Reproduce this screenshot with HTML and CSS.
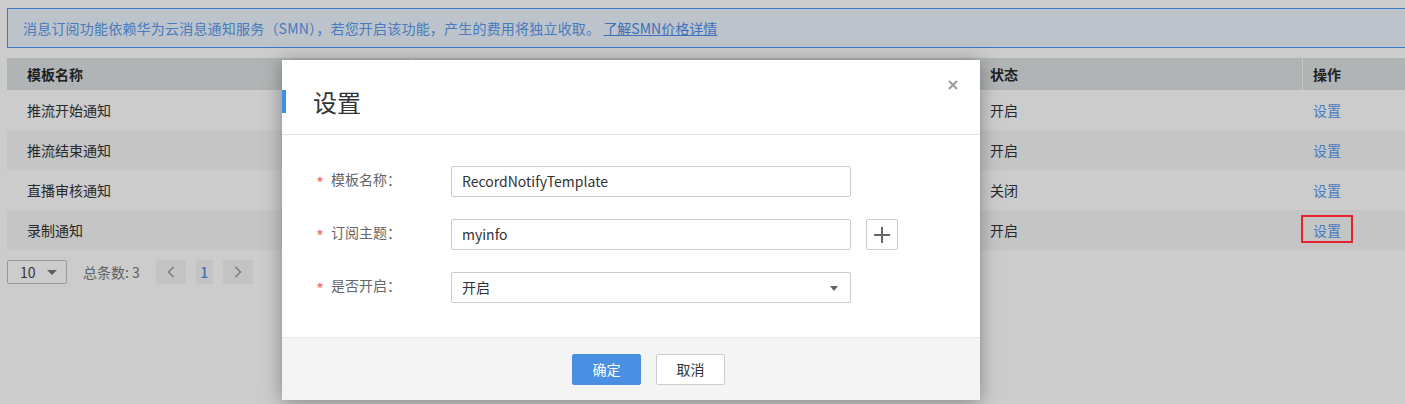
FILE: index.html
```html
<!DOCTYPE html>
<html lang="zh-CN">
<head>
<meta charset="utf-8">
<title>消息订阅</title>
<link rel="stylesheet" href="styles.css">
</head>
<body>
<div class="page">
  <div class="alert"><span class="alert-text">消息订阅功能依赖华为云消息通知服务（SMN），若您开启该功能，产生的费用将独立收取。</span> <a class="alert-link" href="#">了解SMN价格详情</a></div>

  <div class="table">
    <div class="thead">
      <div class="th first">模板名称</div>
      <div class="th">订阅主题</div>
      <div class="th">状态</div>
      <div class="th">操作</div>
    </div>
    <div class="tbody">
      <div class="tr">
        <div class="td first">推流开始通知</div>
        <div class="td">myinfo</div>
        <div class="td">开启</div>
        <div class="td"><a class="link" href="#">设置</a></div>
      </div>
      <div class="tr">
        <div class="td first">推流结束通知</div>
        <div class="td">myinfo</div>
        <div class="td">开启</div>
        <div class="td"><a class="link" href="#">设置</a></div>
      </div>
      <div class="tr">
        <div class="td first">直播审核通知</div>
        <div class="td">myinfo</div>
        <div class="td">关闭</div>
        <div class="td"><a class="link" href="#">设置</a></div>
      </div>
      <div class="tr">
        <div class="td first">录制通知</div>
        <div class="td">myinfo</div>
        <div class="td">开启</div>
        <div class="td"><a class="link" href="#">设置</a></div>
      </div>
    </div>
  </div>

  <div class="pager">
    <div class="size-select"><span>10</span><span class="caret"></span></div>
    <div class="total">总条数: 3</div>
    <div class="pbtn prev"><svg width="8" height="12" viewBox="0 0 8 12"><polyline points="6.5,1 1.5,6 6.5,11" fill="none" stroke="#9a9a9a" stroke-width="1.5"/></svg></div>
    <div class="pnum">1</div>
    <div class="pbtn next"><svg width="8" height="12" viewBox="0 0 8 12"><polyline points="1.5,1 6.5,6 1.5,11" fill="none" stroke="#9a9a9a" stroke-width="1.5"/></svg></div>
  </div>
</div>

<div class="mask"></div>
<div class="mark"></div>

<div class="modal">
  <div class="modal-head">
    <div class="modal-title">设置</div>
    <div class="close"><svg width="10" height="10" viewBox="0 0 10 10"><path d="M1 1L9 9M9 1L1 9" stroke="#9b9b9b" stroke-width="2"/></svg></div>
  </div>
  <div class="modal-body">
    <div class="form-row">
      <div class="label"><span class="req">*</span>模板名称：</div>
      <div class="input">RecordNotifyTemplate</div>
    </div>
    <div class="form-row">
      <div class="label"><span class="req">*</span>订阅主题：</div>
      <div class="input">myinfo</div>
      <div class="plus-btn"><svg width="16" height="16" viewBox="0 0 16 16"><path d="M8 0V16M0 8H16" stroke="#666" stroke-width="2"/></svg></div>
    </div>
    <div class="form-row">
      <div class="label"><span class="req">*</span>是否开启：</div>
      <div class="input select">开启<span class="select-caret"></span></div>
    </div>
  </div>
  <div class="modal-foot">
    <div class="btn primary">确定</div>
    <div class="btn">取消</div>
  </div>
</div>
</body>
</html>
```

FILE: styles.css
```css
html, body {
  margin: 0;
  padding: 0;
  overflow: hidden;
}
body {
  width: 1405px;
  height: 404px;
  position: relative;
  background: #ffffff;
  font-family: "Noto Sans CJK SC", sans-serif;
  font-size: 14px;
  color: #333333;
}
a { text-decoration: none; }

.page {
  width: 1412px;
  padding: 8px 0 0 7px;
}

.alert {
  height: 38px;
  line-height: 38px;
  border: 1px solid #4b96fa;
  background: #ebf4fe;
  color: #5a9af0;
  padding-left: 15px;
  white-space: nowrap;
}
.alert-text {
  letter-spacing: 0.2px;
}
.alert-link {
  color: #4b8fe8;
  text-decoration: underline;
}

.table {
  margin-top: 10px;
}
.thead, .tr {
  display: grid;
  grid-template-columns: 404px 568px 323px 1fr;
}
.thead {
  height: 32px;
  line-height: 32px;
  background: #dee2e2;
  font-weight: bold;
  color: #2a2a2a;
}
.th {
  padding-left: 10px;
  border-left: 1px solid #f8f8f8;
}
.th.first {
  border-left: none;
  padding-left: 20px;
}
.tr {
  height: 40px;
  line-height: 40px;
}
.tr:nth-child(even) {
  background: #f6f7f6;
}
.td {
  padding-left: 11px;
}
.td.first {
  padding-left: 20px;
}
.link {
  color: #5a9af0;
}

.pager {
  margin-top: 10px;
  display: flex;
  align-items: center;
  height: 24px;
}
.size-select {
  width: 46px;
  height: 22px;
  line-height: 22px;
  border: 1px solid #bdbdbd;
  border-radius: 2px;
  padding-left: 12px;
  display: flex;
  align-items: center;
  color: #444;
}
.caret {
  margin-left: 11px;
  width: 0;
  height: 0;
  border-left: 5px solid transparent;
  border-right: 5px solid transparent;
  border-top: 5px solid #777;
}
.total {
  margin-left: 16px;
  color: #777;
}
.pbtn, .pnum {
  height: 24px;
  background: #f4f4f4;
  display: flex;
  align-items: center;
  justify-content: center;
}
.pbtn {
  width: 30px;
}
.prev {
  margin-left: 16px;
}
.pnum {
  width: 17px;
  margin-left: 10px;
  color: #4a90e2;
  font-weight: 500;
}
.next {
  margin-left: 10px;
}

.mask {
  position: absolute;
  inset: 0;
  background: rgba(0, 0, 0, 0.2);
  z-index: 1;
}
.mark {
  position: absolute;
  left: 1301px;
  top: 215px;
  width: 52px;
  height: 28px;
  box-sizing: border-box;
  border: 2px solid #e8212a;
  z-index: 2;
}

.modal {
  position: absolute;
  left: 282px;
  top: 60px;
  width: 698px;
  height: 340px;
  background: #ffffff;
  box-shadow: 0 2px 18px rgba(0, 0, 0, 0.35);
  z-index: 3;
  display: flex;
  flex-direction: column;
}
.modal-head {
  height: 74px;
  border-bottom: 1px solid #e3e3e3;
  position: relative;
}
.modal-title {
  margin-top: 30px;
  height: 23px;
  line-height: 23px;
  border-left: 4px solid #3d8ef0;
  padding-left: 27px;
  font-size: 24px;
  color: #333;
}
.close {
  position: absolute;
  top: 20px;
  right: 22px;
  width: 10px;
  height: 10px;
  display: flex;
}
.modal-body {
  flex: 1;
  padding: 31px 0 0 34px;
}
.form-row {
  display: flex;
  align-items: center;
  height: 31px;
  margin-bottom: 22px;
}
.label {
  width: 135px;
  color: #666;
  white-space: nowrap;
}
.req {
  display: inline-block;
  width: 15px;
  color: #f56c6c;
  font-size: 17px;
  vertical-align: -5px;
}
.input {
  width: 388px;
  height: 29px;
  line-height: 29px;
  border: 1px solid #cccccc;
  border-radius: 2px;
  padding-left: 10px;
  color: #333;
  position: relative;
}
.select {
  display: flex;
  align-items: center;
}
.select-caret {
  position: absolute;
  right: 12px;
  top: 13px;
  width: 0;
  height: 0;
  border-left: 4px solid transparent;
  border-right: 4px solid transparent;
  border-top: 5px solid #666;
}
.plus-btn {
  margin-left: 15px;
  width: 30px;
  height: 29px;
  border: 1px solid #cccccc;
  border-radius: 2px;
  display: flex;
  align-items: center;
  justify-content: center;
}

.modal-foot {
  height: 62px;
  border-top: 1px solid #e8e8e8;
  background: #f4f4f4;
  display: flex;
  align-items: center;
  justify-content: center;
  gap: 15px;
  padding-left: 35px;
}
.btn {
  width: 67px;
  height: 29px;
  line-height: 29px;
  text-align: center;
  border: 1px solid #cccccc;
  border-radius: 2px;
  background: #ffffff;
  color: #333;
}
.btn.primary {
  background: #4a90e2;
  border-color: #4a90e2;
  color: #ffffff;
}
```
